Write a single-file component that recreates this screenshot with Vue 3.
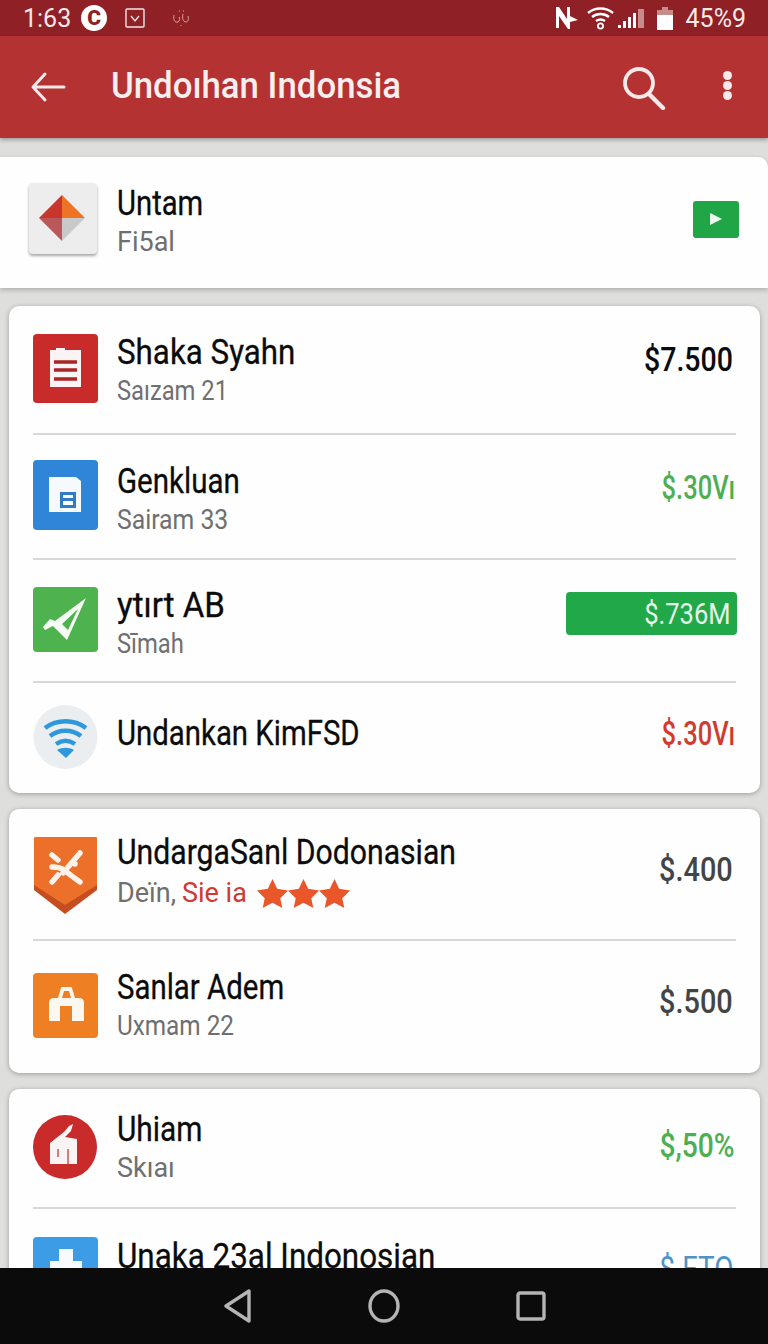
<script setup>
// fit = horizontal squeeze of the text, y = nudges inside the row
const cards = [
  {
    rows: [
      { id: 'doc', h: 129, name: 'Shaka Syahn', fit: 0.895, sub: 'Saızam 21', subFit: 0.88, textY: 3, amount: '$7.500', tone: 'dark', amountFit: 0.84, lift: 21 },
      { id: 'file', h: 125, name: 'Genkluan', fit: 0.844, sub: 'Sairam 33', subFit: 0.917, textY: 8, iconY: -1, amount: '$.30Vı', tone: 'green', amountFit: 0.75, lift: 19 },
      { id: 'check', h: 123, name: 'ytırt AB', fit: 0.945, sub: 'Sīmah', subFit: 0.88, textY: 8, amount: '$.736M', tone: 'pill', amountFit: 0.85, lift: 14 },
      { id: 'wifi', h: 110, name: 'Undankan KimFSD', fit: 0.839, sub: '', textY: -9, amount: '$.30Vı', tone: 'red', amountFit: 0.75, lift: 10 },
    ],
  },
  {
    rows: [
      { id: 'shield', h: 132, name: 'UndargaSanl Dodonasian', fit: 0.862, sub: 'Deïn,', accent: 'Sie ia', stars: 3, textY: -3, iconY: 4, amount: '$.400', tone: 'grey', amountFit: 0.85, lift: 10 },
      { id: 'bag', h: 132, name: 'Sanlar Adem', fit: 0.84, sub: 'Uxmam 22', subFit: 0.9, textY: -1, iconY: -1, amount: '$.500', tone: 'grey', amountFit: 0.85, lift: 12 },
    ],
  },
  {
    rows: [
      { id: 'box', h: 120, name: 'Uhiam', fit: 0.853, sub: 'Skıaı', textY: 0, amount: '$,50%', tone: 'green', amountFit: 0.83, lift: 6 },
      { id: 'plus', h: 120, name: 'Unaka 23al Indonosian', fit: 0.897, sub: '', textY: -25, iconY: 2, amount: '$.FTO', tone: 'blue', amountFit: 0.82, lift: 2 },
    ],
  },
]
</script>

<template>
  <div class="phone">
    <header class="status">
      <div class="status-left">
        <span class="clock">1:63</span>
        <span class="c-badge">C</span>
        <svg class="v-box" viewBox="0 0 20 20" width="20" height="20">
          <rect x="1" y="1" width="18" height="18" rx="1" fill="none" stroke="#f3e4e4" stroke-width="1.4" />
          <path d="M6 8l4 5 4-5" fill="none" stroke="#f3e4e4" stroke-width="1.4" />
        </svg>
        <svg class="squiggle" viewBox="0 0 20 20" width="20" height="20">
          <path d="M3 7c-1 5 1 8 4 7 2-1 2-4 1-5M12 6c-1 4 0 8 3 8 2 0 3-3 2-6M8 3h1M12 3h1M10 17v1" fill="none" stroke="#d9a3a3" stroke-width="1" />
        </svg>
      </div>
      <div class="status-right">
        <svg class="s-n" width="22" height="22" viewBox="0 0 22 22">
          <path d="M0 0l3 0 8 12V0h3v22h-2L3 9v12H0z M14 9l8 4-8 2z" fill="#fff" />
        </svg>
        <svg class="s-wifi" width="27" height="24" viewBox="0 0 27 24" fill="none" stroke="#fff" stroke-width="2.400">
          <path d="M1 7c7-6 18-6 25 0M5 11c5-4 12-4 17 0M9 15c3-2 6-2 9 0" />
          <circle cx="13.500" cy="20" r="2.600" stroke-width="1.800" />
        </svg>
        <svg class="s-signal" width="27" height="19" viewBox="0 0 27 19">
          <path d="M0 19v-3h3v3zM5 19v-7h3v7zM10 19V8h3v11zM15 19V4h3v15z" fill="#fff" />
          <path d="M20 19V0h6v19z" fill="#c98a8a" />
        </svg>
        <svg class="s-batt" width="16" height="23" viewBox="0 0 16 23">
          <path d="M5 0h6v3h5v20H0V3h5z" fill="#c98a8a" />
          <path d="M0 8h16v15H0z" fill="#fff" />
        </svg>
        <span class="percent">45%9</span>
      </div>
    </header>

    <div class="appbar">
      <svg class="back" width="36" height="32" viewBox="0 0 36 32" fill="none" stroke="#f7e9e9" stroke-width="3" stroke-linecap="round" stroke-linejoin="round">
        <path d="M34 16H4M15 3L3 16l12 13" />
      </svg>
      <h1 class="title">Undoıhan Indonsia</h1>
      <svg class="search" width="44" height="44" viewBox="0 0 44 44" fill="none" stroke="#f7e9e9" stroke-width="3.800" stroke-linecap="round">
        <circle cx="17" cy="17" r="14" />
        <path d="M27 28l14 14" stroke-width="4.400" />
      </svg>
      <div class="dots"><i></i><i></i><i></i></div>
    </div>

    <main class="content">
      <section class="top-card">
        <div class="top-icon">
          <svg width="48" height="48" viewBox="0 0 48 48">
            <path d="M24 1L24 24H1z" fill="#c8352c" />
            <path d="M24 1L47 24H24z" fill="#ee7326" />
            <path d="M1 24H24V47z" fill="#b9575a" />
            <path d="M24 24H47L24 47z" fill="#c9c9c9" />
          </svg>
        </div>
        <div class="text">
          <div class="name" style="transform: scaleX(0.836)">Untam</div>
          <div class="sub">Fi5al</div>
        </div>
        <div class="play"><span></span></div>
      </section>

      <section v-for="(card, c) in cards" :key="c" class="card">
        <div v-for="row in card.rows" :key="row.id" class="row" :style="{ height: row.h + 'px' }">
          <div class="icon" :style="{ marginTop: (row.iconY || 0) + 'px' }">
            <svg v-if="row.id === 'doc'" width="65" height="69" viewBox="0 0 65 69">
              <rect width="65" height="69" rx="4" fill="#c92a2a" />
              <path d="M17 16h6v-2h9v2h16v37H17z" fill="#fbf4f4" />
              <path d="M21 28h23M21 36h23M21 45h23" stroke="#a92626" stroke-width="3.400" />
            </svg>
            <svg v-else-if="row.id === 'file'" width="65" height="70" viewBox="0 0 65 70">
              <rect width="65" height="70" rx="4" fill="#2f86d8" />
              <path d="M16 17h27l5 4v31H16z" fill="#f7fafd" />
              <rect x="28.500" y="33.500" width="13" height="13" fill="none" stroke="#2f7bc4" stroke-width="3" />
              <rect x="28" y="38" width="14" height="3" fill="#2f7bc4" />
            </svg>
            <svg v-else-if="row.id === 'check'" width="65" height="65" viewBox="0 0 65 65">
              <rect width="65" height="65" rx="4" fill="#4eb24f" />
              <path d="M53 11L34 53 20 39l-8 4-2-3 7-8 5 2z M45 22L29 37l6 6z" fill="#f6fbf6" fill-rule="evenodd" />
            </svg>
            <svg v-else-if="row.id === 'wifi'" width="65" height="64" viewBox="0 0 65 64">
              <circle cx="32.500" cy="32" r="32" fill="#ebeef0" />
              <g fill="none" stroke="#2f97dc" stroke-width="4.500">
                <path d="M12 23c12-9 29-9 41 0M17 31c9-7 22-7 31 0M23 39c6-4 13-4 19 0" />
              </g>
              <path d="M24 45c5-3 12-3 17 0l-8 8z" fill="#2f97dc" />
            </svg>
            <svg v-else-if="row.id === 'shield'" width="65" height="77" viewBox="0 0 65 77">
              <path d="M1 2q0-2 2-2h59q2 0 2 2v51L32 77 1 53z" fill="#c44e20" />
              <path d="M1 2q0-2 2-2h59q2 0 2 2v46L32 68 1 48z" fill="#ec6f2a" />
              <g fill="none" stroke="#fdf3ea" stroke-width="5.500" stroke-linecap="round">
                <path d="M19 18l6 5M47 16L30 36M19 30c4 0 8 0 12 3s10 8 16 12M19 45l6-7M40 26l2 1" />
              </g>
            </svg>
            <svg v-else-if="row.id === 'bag'" width="65" height="65" viewBox="0 0 65 65">
              <rect width="65" height="65" rx="4" fill="#ee7f22" />
              <path d="M16 30q0-5 5-5h4l3-10q.3-1 1-1h9q1 0 1 1l3 10h4q5 0 5 5v18H39V33H27v15H16z M29 25h9l-2-7h-5z" fill="#fbf7f1" fill-rule="evenodd" />
            </svg>
            <svg v-else-if="row.id === 'box'" width="64" height="64" viewBox="0 0 64 64">
              <circle cx="32" cy="32" r="32" fill="#c92a2a" />
              <path d="M17 28L31 17l5-6 4-2-2 7-6 6 12 2v25H17z" fill="#fbf4f4" />
              <path d="M25 34v8M35 34v15" stroke="#c92a2a" stroke-width="1.200" />
            </svg>
            <svg v-else width="65" height="65" viewBox="0 0 65 65">
              <rect width="65" height="65" rx="4" fill="#3c9ce6" />
              <path d="M26 12h14v12h9v30H17V24h9z" fill="#f7fbff" />
            </svg>
          </div>
          <div class="text" :style="{ marginTop: row.textY + 'px' }">
            <div class="name" :style="{ transform: `scaleX(${row.fit})` }">{{ row.name }}</div>
            <div v-if="row.sub" class="sub" :class="{ 'sub-rated': row.stars }" :style="{ transform: `scaleX(${row.subFit || 1})` }">
              {{ row.sub }}
              <span v-if="row.accent" class="accent">{{ row.accent }}</span>
              <span v-if="row.stars" class="stars">
                <svg v-for="n in row.stars" :key="n" width="31" height="29" viewBox="0 0 30 28">
                  <path d="M15 0l4.500 9.500L30 11l-7.500 7.500L24.500 28 15 23l-9.500 5 2-9.500L0 11l10.500-1.500z" fill="#e8562a" />
                </svg>
              </span>
            </div>
          </div>
          <div class="amount" :class="row.tone" :style="{ marginBottom: row.lift + 'px' }">
            <span :style="{ transform: `scaleX(${row.amountFit})` }">{{ row.amount }}</span>
          </div>
        </div>
      </section>
    </main>

    <nav class="navbar">
      <svg width="28" height="34" viewBox="0 0 28 34" fill="none" stroke="#b4b4b4" stroke-width="3.400" stroke-linejoin="round">
        <path d="M25 2v30L2 17z" />
      </svg>
      <svg width="32" height="34" viewBox="0 0 32 34" fill="none" stroke="#b4b4b4" stroke-width="3.400">
        <ellipse cx="16" cy="17" rx="14" ry="15" />
      </svg>
      <svg width="30" height="30" viewBox="0 0 30 30" fill="none" stroke="#b4b4b4" stroke-width="3.400" stroke-linejoin="round">
        <rect x="2" y="2" width="26" height="26" rx="2" />
      </svg>
    </nav>
  </div>
</template>

<style>
html,
body {
  margin: 0;
  background: #e4e4e2;
}
</style>

<style scoped>
.phone {
  width: 768px;
  height: 1344px;
  display: flex;
  flex-direction: column;
  overflow: hidden;
  background: #dededc;
  font-family: Roboto, "Liberation Sans", sans-serif;
}
.status {
  height: 36px;
  flex: none;
  display: flex;
  justify-content: space-between;
  align-items: center;
  padding: 0 22px 0 23px;
  background: #8e2026;
  color: #f6e9e9;
}
.status-left,
.status-right {
  display: flex;
  align-items: center;
}
.clock {
  font-size: 25px;
  margin-right: 10px;
}
.c-badge {
  width: 26px;
  height: 26px;
  border-radius: 50%;
  background: #fff;
  color: #8e2026;
  font-size: 21px;
  font-weight: 900;
  line-height: 26px;
  text-align: center;
  margin-right: 18px;
}
.squiggle {
  margin-left: 26px;
}
.s-wifi {
  margin-left: 9px;
}
.s-signal {
  margin-left: 4px;
}
.s-batt {
  margin-left: 12px;
}
.percent {
  font-size: 25px;
  margin-left: 13px;
}
.appbar {
  height: 102px;
  flex: none;
  display: flex;
  align-items: center;
  padding: 0 36px 0 30px;
  background: #b43231;
  box-shadow: 0 2px 4px rgba(0, 0, 0, 0.3);
  position: relative;
}
.title {
  margin: 0 0 4px 45px;
  flex: 1;
  color: #f9eeee;
  font-size: 37px;
  font-weight: 500;
  white-space: nowrap;
  transform: scaleX(0.94);
  transform-origin: left center;
}
.search {
  margin-right: 57px;
  margin-top: 2px;
}
.dots {
  display: flex;
  flex-direction: column;
  gap: 1px;
  margin-bottom: 4px;
}
.dots i {
  width: 9px;
  height: 9px;
  border-radius: 50%;
  background: #f7e9e9;
}
.content {
  flex: 1;
  min-height: 0;
  overflow: hidden;
  padding-top: 19px;
  display: flex;
  flex-direction: column;
  gap: 16px;
}
.top-card {
  height: 131px;
  flex: none;
  display: flex;
  align-items: center;
  padding: 0 29px;
  background: #fefefe;
  border-radius: 0 10px 0 0;
  box-shadow: 0 2px 5px rgba(0, 0, 0, 0.22);
  margin-bottom: 2px;
}
.top-icon {
  width: 68px;
  height: 71px;
  flex: none;
  display: flex;
  align-items: center;
  justify-content: center;
  margin-right: 20px;
  margin-top: -9px;
  padding-right: 3px;
  box-sizing: border-box;
  border-radius: 4px;
  background: #eeeded;
  box-shadow: 0 2px 3px rgba(0, 0, 0, 0.35);
}
.play {
  width: 46px;
  height: 37px;
  flex: none;
  display: flex;
  align-items: center;
  justify-content: center;
  border-radius: 3px;
  background: #20a647;
  margin-top: -7px;
}
.play span {
  width: 0;
  height: 0;
  border-left: 12px solid #eef9f0;
  border-top: 6px solid transparent;
  border-bottom: 6px solid transparent;
}
.card {
  flex: none;
  margin: 0 8px 0 9px;
  padding: 0 24px;
  border-radius: 10px;
  background: #fefefe;
  box-shadow: 0 1px 5px rgba(0, 0, 0, 0.3);
}
.row {
  display: flex;
  align-items: center;
  box-sizing: border-box;
  border-bottom: 2px solid #d8d8da;
}
.row:last-child {
  border-bottom: none;
}
.icon {
  width: 65px;
  flex: none;
  display: flex;
  margin-right: 19px;
  margin-bottom: 2px;
}
.text {
  flex: 1;
  min-width: 0;
}
.name {
  color: #0b0b0b;
  font-size: 35px;
  line-height: 38px;
  white-space: nowrap;
  transform-origin: left center;
  -webkit-text-stroke: 0.3px #0b0b0b;
}
.sub {
  display: flex;
  align-items: center;
  gap: 6px;
  margin-top: 1px;
  color: #6f6f6f;
  font-size: 27px;
  line-height: 36px;
  white-space: nowrap;
  transform-origin: left center;
}
.sub-rated {
  margin-top: 3px;
}
.accent {
  color: #cf3a31;
}
.stars {
  display: flex;
  margin-left: 4px;
}
.amount {
  padding-right: 3px;
  font-size: 34px;
  white-space: nowrap;
}
.amount span {
  display: inline-block;
  transform-origin: right center;
}
.dark {
  color: #0b0b0b;
  font-weight: 500;
}
.grey {
  color: #444;
  font-weight: 500;
}
.green {
  color: #4caf50;
  font-weight: 500;
  margin-right: -2px;
}
.red {
  color: #d33a2f;
  font-weight: 500;
  margin-right: -2px;
}
.blue {
  color: #4a94c9;
}
.pill {
  width: 171px;
  height: 43px;
  box-sizing: border-box;
  margin-right: -1px;
  border-radius: 4px;
  padding: 0 6px 0 0;
  background: #21a849;
  color: #e6f6ea;
  font-size: 30px;
  line-height: 43px;
  text-align: right;
}
.navbar {
  height: 76px;
  flex: none;
  display: flex;
  align-items: center;
  justify-content: center;
  gap: 116px;
  padding-left: 2px;
  background: #0b0b0b;
}
</style>
